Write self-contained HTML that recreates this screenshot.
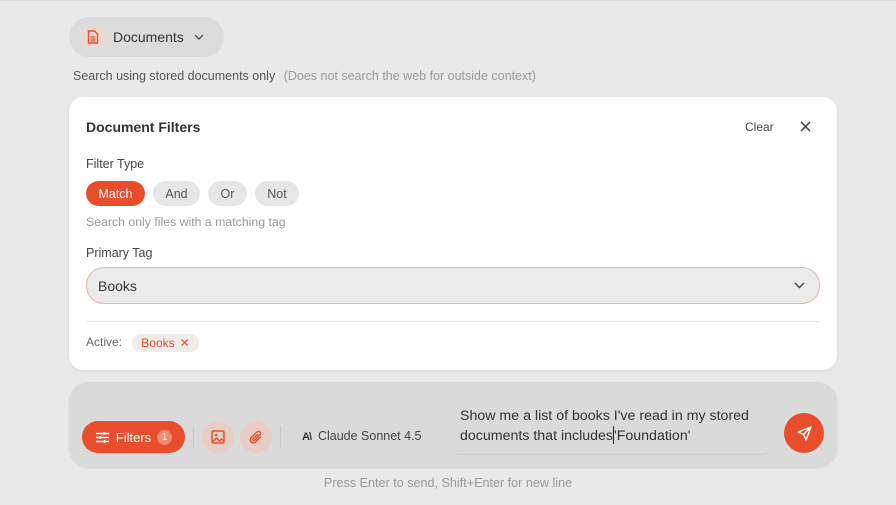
<!DOCTYPE html>
<html><head><meta charset="utf-8"><style>
*{box-sizing:border-box;margin:0;padding:0}
body{width:896px;height:505px;background:#e9e9e9;font-family:"Liberation Sans",sans-serif;position:relative;overflow:hidden;color:#333}
.a{position:absolute}
.pill{border-radius:20px;display:flex;align-items:center;justify-content:center;font-size:13px}
</style></head><body>
<div class="a" style="left:0;top:0;width:896px;height:1px;background:#ddd"></div>
<div class="a pill" style="left:69px;top:17px;width:155px;height:40px;background:#dcdcdc;justify-content:flex-start">
 <div style="width:24px;height:24px;border-radius:12px;background:#efd6d0;margin-left:12px;display:flex;align-items:center;justify-content:center">
  <svg width="12" height="14" viewBox="0 0 12 14"><path d="M1.5 1h6l3 3v9h-9z" fill="none" stroke="#e8502e" stroke-width="1.4"/><path d="M3.5 7h5M3.5 9h5M3.5 11h5" stroke="#e8502e" stroke-width="1.2"/></svg>
 </div>
 <span style="margin-left:8px;font-size:14px;color:#333">Documents</span>
 <svg style="margin-left:10px" width="10" height="6" viewBox="0 0 10 6"><path d="M1 1l4 4 4-4" fill="none" stroke="#555" stroke-width="1.4"/></svg>
</div>
<div class="a" style="left:73px;top:69px;font-size:12.5px;color:#555">Search using stored documents only <span style="color:#999;margin-left:5px">(Does not search the web for outside context)</span></div>

<div class="a" style="left:69px;top:97px;width:768px;height:273px;background:#fff;border-radius:14px;box-shadow:0 1px 3px rgba(0,0,0,.08)">
 <div class="a" style="left:17px;top:22px;font-size:14px;font-weight:bold;color:#333">Document Filters</div>
 <div class="a" style="left:676px;top:23px;font-size:12px;color:#444">Clear</div>
 <svg class="a" style="left:731px;top:24px" width="11" height="11" viewBox="0 0 11 11"><path d="M1 1l9 9M10 1l-9 9" stroke="#444" stroke-width="1.5"/></svg>
 <div class="a" style="left:17px;top:60px;font-size:12.5px;color:#444">Filter Type</div>
 <div class="a pill" style="left:17px;top:84px;width:59px;height:25px;background:#e84e2c;color:#fff;font-size:12.5px">Match</div>
 <div class="a pill" style="left:84px;top:84px;width:47px;height:25px;background:#e6e6e6;color:#555;font-size:12.5px">And</div>
 <div class="a pill" style="left:139px;top:84px;width:39px;height:25px;background:#e6e6e6;color:#555;font-size:12.5px">Or</div>
 <div class="a pill" style="left:186px;top:84px;width:44px;height:25px;background:#e6e6e6;color:#555;font-size:12.5px">Not</div>
 <div class="a" style="left:17px;top:118px;font-size:12.3px;color:#999">Search only files with a matching tag</div>
 <div class="a" style="left:17px;top:149px;font-size:12.5px;color:#444">Primary Tag</div>
 <div class="a" style="left:17px;top:170px;width:734px;height:37px;border-radius:18px;background:#ebebeb;border:1px solid #e6b5a9">
  <div class="a" style="left:11px;top:10px;font-size:14px;color:#333">Books</div>
  <svg class="a" style="left:707px;top:14px" width="11" height="7" viewBox="0 0 11 7"><path d="M1 1l4.5 4.5L10 1" fill="none" stroke="#444" stroke-width="1.4"/></svg>
 </div>
 <div class="a" style="left:17px;top:224px;width:734px;height:1px;background:#eaeaea"></div>
 <div class="a" style="left:17px;top:238px;font-size:12px;color:#666">Active:</div>
 <div class="a pill" style="left:63px;top:237px;width:67px;height:18px;background:#f0ecea;color:#e84e2c;font-size:12px">Books <span style="margin-left:5px;font-size:12px">✕</span></div>
</div>

<div class="a" style="left:69px;top:382px;width:768px;height:85px;background:#dadada;border-radius:20px;box-shadow:0 1px 2px rgba(0,0,0,.1)">
 <div class="a pill" style="left:13px;top:39px;width:103px;height:32px;background:#e84e2c;color:#fff;font-size:13px">
  <svg width="15" height="13" viewBox="0 0 15 13"><path d="M1 2.5h13M1 6.5h13M1 10.5h13" stroke="#fff" stroke-width="1.4"/><path d="M9 1v3M5 5v3M9.5 9v3" stroke="#fff" stroke-width="1.6"/></svg>
  <span style="margin-left:6px">Filters</span>
  <span style="margin-left:6px;width:15px;height:15px;border-radius:8px;background:#f08a72;font-size:10px;display:flex;align-items:center;justify-content:center">1</span>
 </div>
 <div class="a" style="left:124px;top:44px;width:1px;height:22px;background:#ccc"></div>
 <div class="a pill" style="left:133px;top:39px;width:32px;height:32px;background:#e8cdc7">
  <svg width="14" height="14" viewBox="0 0 14 14"><rect x="1" y="1" width="12" height="12" rx="1.5" fill="none" stroke="#e8502e" stroke-width="1.5"/><circle cx="5" cy="5" r="1.3" fill="#e8502e"/><path d="M1.5 12l4-4 3 3 2-2 2.5 2.5" fill="none" stroke="#e8502e" stroke-width="1.4"/></svg>
 </div>
 <div class="a pill" style="left:171px;top:39px;width:32px;height:32px;background:#e8cdc7">
  <svg width="14" height="14" viewBox="0 0 14 14"><path d="M12 6.5l-5.5 5.5a3 3 0 0 1-4.3-4.3L8 1.9a2 2 0 0 1 2.9 2.9L5.2 10.5a1 1 0 0 1-1.4-1.4L9 4" fill="none" stroke="#e8502e" stroke-width="1.4"/></svg>
 </div>
 <div class="a" style="left:211px;top:44px;width:1px;height:22px;background:#ccc"></div>
 <div class="a" style="left:233px;top:47px;font-size:12.5px;color:#444"><b style="font-size:11px;letter-spacing:-1px;color:#333">A\</b>&nbsp; Claude Sonnet 4.5</div>
 <div class="a" style="left:381px;top:16px;width:322px;height:57px;border-bottom:1px solid #d0d0d0;border-radius:0 0 10px 10px"></div>
 <div class="a" style="left:391px;top:24px;font-size:14.2px;line-height:20px;color:#333">Show me a list of books I've read in my stored<br>documents that includes<span style="display:inline-block;width:1px;height:18px;background:#222;vertical-align:-4px"></span>'Foundation'</div>
 <div class="a pill" style="left:715px;top:31px;width:40px;height:40px;background:#e84e2c">
  <svg width="15" height="15" viewBox="0 0 15 15"><path d="M14 1L1 6l5.5 2.5L9 14z M14 1L6.5 8.5" fill="none" stroke="#fff" stroke-width="1.4" stroke-linejoin="round"/></svg>
 </div>
</div>
<div class="a" style="left:0;width:896px;top:476px;text-align:center;font-size:12.6px;color:#999">Press Enter to send, Shift+Enter for new line</div>
</body></html>
